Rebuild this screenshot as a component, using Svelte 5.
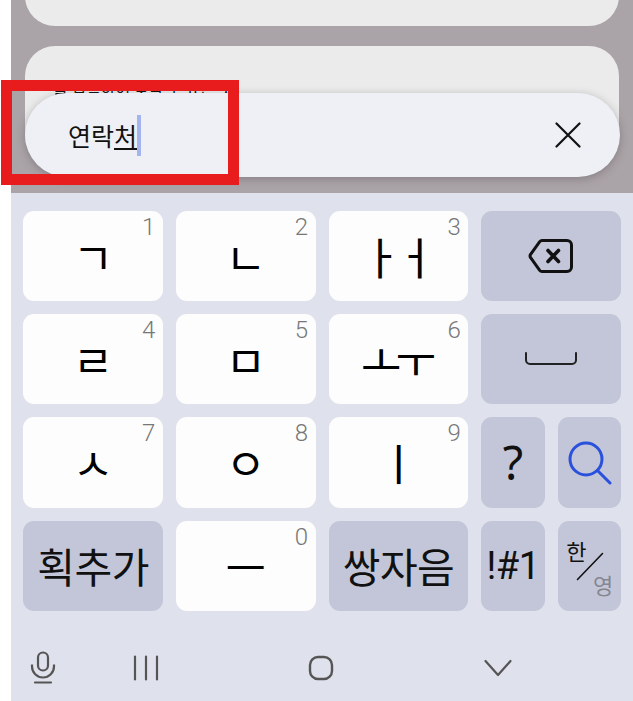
<script>
  const rows = [
    [
      { label: 'ㄱ', num: '1' },
      { label: 'ㄴ', num: '2' },
      { label: 'ㅏㅓ', num: '3' },
      { icon: 'back' }
    ],
    [
      { label: 'ㄹ', num: '4' },
      { label: 'ㅁ', num: '5' },
      { label: 'ㅗㅜ', num: '6' },
      { icon: 'space' }
    ],
    [
      { label: 'ㅅ', num: '7' },
      { label: 'ㅇ', num: '8' },
      { label: 'ㅣ', num: '9' },
      { pair: ['question', 'search'] }
    ],
    [
      { text: '획추가' },
      { label: 'ㅡ', num: '0' },
      { text: '쌍자음' },
      { pair: ['symbols', 'lang'] }
    ]
  ]
</script>

<div class="screen">
  <div class="backdrop">
    <div class="card first"></div>
    <div class="card second"><span class="peek">을 입력하여 찾을 수 있는 것</span></div>
  </div>

  <div class="searchbar">
    <span class="query">연락<u>처</u><i class="caret"></i></span>
    <svg class="close" width="26" height="26" viewBox="0 0 26 26">
      <path d="M1.500 1.500 24.500 24.500M24.500 1.500 1.500 24.500" />
    </svg>
  </div>

  <div class="keyboard">
    <div class="keys">
      {#each rows as row}
        {#each row as key}
          {#if key.pair}
            <div class="pair">
              {#each key.pair as name}
                <div class="key dark">
                  {#if name === 'question'}
                    <span class="question">?</span>
                  {:else if name === 'search'}
                    <svg width="46" height="46" viewBox="0 0 46 46">
                      <circle cx="20" cy="20" r="16" fill="none" stroke="#2a50dc" stroke-width="3" />
                      <path d="M32 32 44 44" fill="none" stroke="#2a50dc" stroke-width="3" stroke-linecap="round" />
                    </svg>
                  {:else if name === 'symbols'}
                    <span class="symbols">!#1</span>
                  {:else}
                    <div class="lang">
                      <span class="han">한</span>
                      <svg class="slash" width="28" height="29" viewBox="0 0 28 29">
                        <path d="M1.500 27.500 26.500 1.500" stroke="#111" stroke-width="1.600" stroke-linecap="round" />
                      </svg>
                      <span class="yeong">영</span>
                    </div>
                  {/if}
                </div>
              {/each}
            </div>
          {:else if key.icon}
            <div class="key dark">
              {#if key.icon === 'back'}
                <svg width="46" height="36" viewBox="0 0 46 36">
                  <path d="M14 2.500H39a4.500 4.500 0 0 1 4.500 4.500V29a4.500 4.500 0 0 1-4.500 4.500H14a3 3 0 0 1-2.300-1.100L2.800 20a3.300 3.300 0 0 1 0-4L11.700 3.600A3 3 0 0 1 14 2.500Z" fill="none" stroke="#111" stroke-width="3" />
                  <path d="M20 12.500 30.500 23.500M30.500 12.500 20 23.500" fill="none" stroke="#111" stroke-width="3.600" stroke-linecap="round" />
                </svg>
              {:else}
                <svg class="spacebar" width="52" height="13" viewBox="0 0 52 13">
                  <path d="M1 1v7a4 4 0 0 0 4 4h42a4 4 0 0 0 4-4V1" fill="none" stroke="#222" stroke-width="2" stroke-linecap="round" />
                </svg>
              {/if}
            </div>
          {:else if key.text}
            <div class="key dark"><span class="word">{key.text}</span></div>
          {:else}
            <div class="key">
              <span class="jamo" class:double={key.label.length > 1}>{key.label}</span>
              <span class="num">{key.num}</span>
            </div>
          {/if}
        {/each}
      {/each}
    </div>

    <div class="navbar">
      <svg class="mic" width="26" height="34" viewBox="0 0 26 34">
        <rect x="8" y="1.500" width="10" height="18" rx="5" fill="none" stroke="#555" stroke-width="2.200" />
        <path d="M2 13.500v2a11 11 0 0 0 22 0v-2" fill="none" stroke="#555" stroke-width="2.200" />
        <path d="M5 31.500H21" stroke="#555" stroke-width="2.200" stroke-linecap="round" />
      </svg>
      <svg class="recents" width="26" height="26" viewBox="0 0 26 26">
        <path d="M2 1.500v23M13 1.500v23M24 1.500v23" stroke="#555" stroke-width="2.200" stroke-linecap="round" />
      </svg>
      <svg class="home" width="26" height="26" viewBox="0 0 26 26">
        <rect x="2" y="2" width="22" height="22" rx="8" fill="none" stroke="#555" stroke-width="2.400" />
      </svg>
      <svg class="hide" width="28" height="18" viewBox="0 0 28 18">
        <path d="M1.500 2 14 16 26.500 2" fill="none" stroke="#555" stroke-width="2.200" stroke-linecap="round" stroke-linejoin="round" />
      </svg>
    </div>
  </div>

  <div class="annotation"></div>
</div>

<style>
  :global(body) {
    background: #fff;
  }

  .screen {
    position: relative;
    width: 633px;
    height: 701px;
    padding-left: 11px;
    box-sizing: border-box;
    overflow: hidden;
    font-family: "Noto Sans CJK KR", "Liberation Sans", sans-serif;
    color: #111;
  }

  .backdrop {
    height: 193px;
    padding: 0 14px;
    box-sizing: border-box;
    background: #aaa3a7;
    overflow: hidden;
    display: flex;
    flex-direction: column;
    gap: 20px;
  }

  .card {
    background: #ebebeb;
    flex: none;
  }

  .first {
    height: 60px;
    margin-top: -34px;
    border-radius: 0 0 30px 30px;
  }

  .second {
    height: 120px;
    border-radius: 30px;
    position: relative;
  }

  .peek {
    position: absolute;
    left: 28px;
    top: 33px;
    font-size: 16px;
    line-height: 18px;
    white-space: nowrap;
  }

  .searchbar {
    position: absolute;
    left: 25px;
    top: 93px;
    width: 594.500px;
    height: 84px;
    padding: 0 39px 0 43px;
    box-sizing: border-box;
    display: flex;
    align-items: center;
    justify-content: space-between;
    background: #eef0f6;
    border-radius: 42px;
    box-shadow: 0 2px 8px rgba(70, 60, 65, 0.35);
  }

  .query {
    display: inline-flex;
    align-items: center;
    font-size: 25px;
    line-height: 42px;
  }

  .query u {
    text-decoration-thickness: 2px;
    text-underline-offset: 2px;
  }

  .caret {
    flex: none;
    width: 4px;
    height: 41px;
    background: #a4b4ee;
  }

  .close path {
    fill: none;
    stroke: #111;
    stroke-width: 2.200;
    stroke-linecap: round;
  }

  .keyboard {
    height: 508px;
    background: #dfe2ec;
    padding: 17.700px 12px 0 12.300px;
    box-sizing: border-box;
  }

  .keys {
    display: grid;
    grid-template-columns: repeat(4, 1fr);
    grid-auto-rows: 90.300px;
    gap: 13px 13.100px;
  }

  .pair {
    display: grid;
    grid-template-columns: 1fr 1fr;
    gap: 13px;
  }

  .key {
    position: relative;
    display: flex;
    align-items: center;
    justify-content: center;
    background: #fdfdfd;
    border-radius: 11px;
  }

  .dark {
    background: #c3c6d8;
  }

  .jamo {
    font-size: 44px;
    line-height: 1;
    white-space: pre;
    color: #000;
  }

  .double {
    letter-spacing: -6px;
    margin-right: 6px;
  }

  .num {
    position: absolute;
    top: 3px;
    right: 7.500px;
    font-family: "Roboto", sans-serif;
    font-weight: 300;
    font-size: 24px;
    line-height: 26px;
    color: #777;
  }

  .word {
    font-size: 41px;
    letter-spacing: -0.500px;
    line-height: 1;
  }

  .question {
    font-family: "Noto Sans", sans-serif;
    font-size: 47px;
    line-height: 1;
  }

  .symbols {
    font-family: "Roboto", sans-serif;
    font-size: 38px;
    line-height: 1;
    letter-spacing: -0.500px;
  }

  .lang {
    position: relative;
    width: 46px;
    height: 56px;
  }

  .han {
    position: absolute;
    left: 0;
    top: -1px;
    font-size: 22px;
    line-height: 26px;
  }

  .yeong {
    position: absolute;
    right: -1px;
    bottom: -3px;
    font-size: 22px;
    line-height: 26px;
    color: #85868f;
  }

  .slash {
    position: absolute;
    left: 9.500px;
    top: 14.500px;
  }

  .spacebar {
    margin-top: -2px;
  }

  .navbar {
    height: 90px;
    padding: 24px 0 0 7px;
    box-sizing: border-box;
    display: flex;
    align-items: center;
  }

  .recents {
    margin-left: 77px;
  }

  .home {
    margin-left: 149px;
  }

  .hide {
    margin-left: 150px;
  }

  .annotation {
    position: absolute;
    left: 1px;
    top: 80px;
    width: 238px;
    height: 105px;
    box-sizing: border-box;
    border: 11px solid #e81c1c;
  }
</style>
